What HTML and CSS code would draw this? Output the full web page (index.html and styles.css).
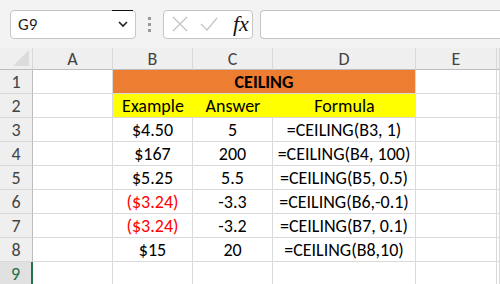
FILE: index.html
```html
<!DOCTYPE html>
<html lang="en">
<head>
  <meta charset="UTF-8">
  <title>CEILING</title>
  <link rel="stylesheet" href="styles.css">
</head>
<body>
  <div class="formula-bar">
    <div class="name-box">
      <span>G9</span>
      <svg class="chevron" width="12" height="8" viewBox="0 0 12 8"><path d="M2 2 L6 6 L10 2" fill="none" stroke="#222" stroke-width="1.6"/></svg>
    </div>
    <div class="dots"><i></i><i></i><i></i></div>
    <div class="fx-box">
      <svg width="18" height="18" viewBox="0 0 18 18"><path d="M2 2 L16 16 M16 2 L2 16" stroke="#c4c4c4" stroke-width="1.3" fill="none"/></svg>
      <svg width="20" height="18" viewBox="0 0 20 18"><path d="M2 9 L8 15 L18 3" stroke="#c4c4c4" stroke-width="1.3" fill="none"/></svg>
      <span class="fx">fx</span>
    </div>
    <div class="input-box"></div>
  </div>

  <div class="sheet">
    <div class="corner"><span class="tri"></span></div>
    <div class="col-head">A</div>
    <div class="col-head">B</div>
    <div class="col-head">C</div>
    <div class="col-head">D</div>
    <div class="col-head">E</div>
    <div class="col-head"></div>

    <div class="row-head">1</div>
    <div class="cell"></div>
    <div class="cell title">CEILING</div>
    <div class="cell"></div>
    <div class="cell"></div>

    <div class="row-head">2</div>
    <div class="cell"></div>
    <div class="cell head">Example</div>
    <div class="cell head">Answer</div>
    <div class="cell head">Formula</div>
    <div class="cell"></div>
    <div class="cell"></div>

    <div class="row-head">3</div>
    <div class="cell"></div>
    <div class="cell">$4.50</div>
    <div class="cell">5</div>
    <div class="cell">=CEILING(B3, 1)</div>
    <div class="cell"></div>
    <div class="cell"></div>

    <div class="row-head">4</div>
    <div class="cell"></div>
    <div class="cell">$167</div>
    <div class="cell">200</div>
    <div class="cell">=CEILING(B4, 100)</div>
    <div class="cell"></div>
    <div class="cell"></div>

    <div class="row-head">5</div>
    <div class="cell"></div>
    <div class="cell">$5.25</div>
    <div class="cell">5.5</div>
    <div class="cell">=CEILING(B5, 0.5)</div>
    <div class="cell"></div>
    <div class="cell"></div>

    <div class="row-head">6</div>
    <div class="cell"></div>
    <div class="cell neg">($3.24)</div>
    <div class="cell">-3.3</div>
    <div class="cell">=CEILING(B6,-0.1)</div>
    <div class="cell"></div>
    <div class="cell"></div>

    <div class="row-head">7</div>
    <div class="cell"></div>
    <div class="cell neg">($3.24)</div>
    <div class="cell">-3.2</div>
    <div class="cell">=CEILING(B7, 0.1)</div>
    <div class="cell"></div>
    <div class="cell"></div>

    <div class="row-head">8</div>
    <div class="cell"></div>
    <div class="cell">$15</div>
    <div class="cell">20</div>
    <div class="cell">=CEILING(B8,10)</div>
    <div class="cell"></div>
    <div class="cell"></div>

    <div class="row-head active">9</div>
    <div class="cell"></div>
    <div class="cell"></div>
    <div class="cell"></div>
    <div class="cell"></div>
    <div class="cell"></div>
    <div class="cell"></div>
  </div>
</body>
</html>
```

FILE: styles.css
```css
body {
  margin: 0;
  font-family: Calibri, Carlito, 'Liberation Sans', sans-serif;
  background: #fff;
  overflow: hidden;
}

.formula-bar {
  height: 48px;
  background: #f3f3f3;
  display: flex;
  align-items: center;
  padding-left: 10px;
  box-sizing: border-box;
}

.name-box {
  width: 126px;
  height: 29px;
  box-sizing: border-box;
  background: #fff;
  border: 1px solid #c6c6c6;
  border-radius: 4px;
  display: flex;
  align-items: center;
  justify-content: space-between;
  padding: 0 6px 0 7px;
  font-size: 17px;
  color: #222;
  position: relative;
}

.name-box::after {
  content: "";
  position: absolute;
  top: -1px;
  right: 2px;
  width: 21px;
  height: 1px;
  background: #111;
}

.dots {
  width: 27px;
  display: flex;
  flex-direction: column;
  align-items: center;
  gap: 3px;
}

.dots i {
  width: 3px;
  height: 3px;
  background: #999;
}

.fx-box {
  width: 90px;
  height: 29px;
  box-sizing: border-box;
  background: #fff;
  border: 1px solid #c6c6c6;
  border-radius: 4px;
  display: flex;
  align-items: center;
  gap: 10px;
  padding-left: 7px;
}

.fx {
  font-family: 'Liberation Serif', serif;
  font-style: italic;
  font-size: 22px;
  color: #111;
  margin-left: 4px;
}

.input-box {
  flex: 1;
  height: 29px;
  margin-left: 7px;
  box-sizing: border-box;
  background: #fff;
  border: 1px solid #c6c6c6;
  border-right: none;
  border-radius: 4px 0 0 4px;
}

.sheet {
  display: grid;
  grid-template-columns: 33px 80px 80px 80px 143px 81px 1fr;
  grid-template-rows: 22px repeat(9, 24px);
  font-size: 18px;
  color: #000;
}

.corner {
  background: #efefef;
  border-right: 1px solid #d8d8d8;
  border-bottom: 1px solid #bdbdbd;
  position: relative;
}

.tri {
  position: absolute;
  right: 3px;
  bottom: 3px;
  width: 0;
  height: 0;
  border-left: 16px solid transparent;
  border-bottom: 16px solid #dcdcdc;
}

.col-head {
  background: #efefef;
  border-right: 1px solid #d8d8d8;
  border-bottom: 1px solid #bdbdbd;
  display: flex;
  align-items: center;
  justify-content: center;
  color: #444;
}

.row-head {
  background: #efefef;
  border-right: 1px solid #bdbdbd;
  border-bottom: 1px solid #d8d8d8;
  display: flex;
  align-items: center;
  justify-content: center;
  color: #444;
}

.row-head.active {
  background: #e1e1e1;
  color: #217346;
  border-right: 2px solid #217346;
}

.cell {
  border-right: 1px solid #dadada;
  border-bottom: 1px solid #dadada;
  display: flex;
  align-items: center;
  justify-content: center;
  white-space: nowrap;
}

.title {
  grid-column: span 3;
  background: #ed7d31;
  font-weight: bold;
}

.head {
  background: #ffff00;
  border-right: none;
}

.neg {
  color: #ff0000;
}
```
